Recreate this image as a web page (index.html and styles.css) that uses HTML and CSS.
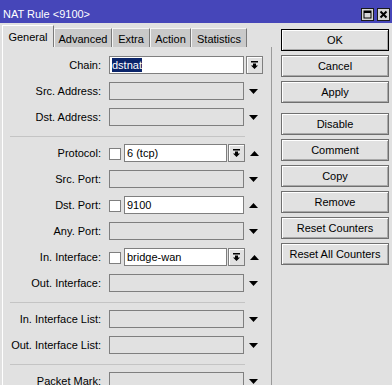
FILE: index.html
```html
<!DOCTYPE html>
<html>
<head>
    <meta charset="UTF-8">
    <title>NAT Rule &lt;9100&gt;</title>
    <link rel="stylesheet" href="styles.css">
</head>
<body>
    <div class="window">
        <div class="titlebar">
            <span class="title">NAT Rule &lt;9100&gt;</span>
            <div class="winbtns">
                <span class="winbtn">
                    <svg width="9" height="9" viewBox="0 0 9 9"><rect x="1" y="1" width="7" height="7" fill="none" stroke="#000"/><rect x="1" y="1" width="7" height="2"/></svg>
                </span>
                <span class="winbtn">
                    <svg width="9" height="9" viewBox="0 0 9 9"><path d="M1.5 1.5l6 6M7.5 1.5l-6 6" stroke="#000" stroke-width="2"/></svg>
                </span>
            </div>
        </div>

        <div class="main">
            <div class="left">
                <div class="tabs">
                    <div class="tab active" style="width:52px">General</div>
                    <div class="tab" style="width:58px">Advanced</div>
                    <div class="tab" style="width:38px">Extra</div>
                    <div class="tab" style="width:41px">Action</div>
                    <div class="tab" style="width:56px">Statistics</div>
                </div>

                <div class="panel">
                    <div class="row">
                        <label>Chain:</label>
                        <div class="input select"><span class="sel">dstnat</span></div>
                        <span class="dropbtn wide"><svg width="7" height="8" viewBox="0 0 7 8"><rect x="0" y="0" width="7" height="1.5"/><path d="M2 2.5h3v2h2l-3.5 3.5-3.5-3.5h2z"/></svg></span>
                    </div>
                    <div class="row">
                        <label>Src. Address:</label>
                        <div class="input empty"></div>
                        <span class="arrow"><svg width="9" height="5" viewBox="0 0 9 5"><path d="M0 0h9l-4.5 5z"/></svg></span>
                    </div>
                    <div class="row">
                        <label>Dst. Address:</label>
                        <div class="input empty"></div>
                        <span class="arrow"><svg width="9" height="5" viewBox="0 0 9 5"><path d="M0 0h9l-4.5 5z"/></svg></span>
                    </div>

                    <div class="sep"></div>

                    <div class="row">
                        <label>Protocol:</label>
                        <span class="check"></span>
                        <div class="input short">6 (tcp)</div>
                        <span class="dropbtn"><svg width="7" height="8" viewBox="0 0 7 8"><rect x="0" y="0" width="7" height="1.5"/><path d="M2 2.5h3v2h2l-3.5 3.5-3.5-3.5h2z"/></svg></span>
                        <span class="arrow"><svg width="9" height="5" viewBox="0 0 9 5"><path d="M0 5h9l-4.5-5z"/></svg></span>
                    </div>
                    <div class="row">
                        <label>Src. Port:</label>
                        <div class="input empty"></div>
                        <span class="arrow"><svg width="9" height="5" viewBox="0 0 9 5"><path d="M0 0h9l-4.5 5z"/></svg></span>
                    </div>
                    <div class="row">
                        <label>Dst. Port:</label>
                        <span class="check"></span>
                        <div class="input long">9100</div>
                        <span class="arrow"><svg width="9" height="5" viewBox="0 0 9 5"><path d="M0 5h9l-4.5-5z"/></svg></span>
                    </div>
                    <div class="row">
                        <label>Any. Port:</label>
                        <div class="input empty"></div>
                        <span class="arrow"><svg width="9" height="5" viewBox="0 0 9 5"><path d="M0 0h9l-4.5 5z"/></svg></span>
                    </div>
                    <div class="row">
                        <label>In. Interface:</label>
                        <span class="check"></span>
                        <div class="input short">bridge-wan</div>
                        <span class="dropbtn"><svg width="7" height="8" viewBox="0 0 7 8"><rect x="0" y="0" width="7" height="1.5"/><path d="M2 2.5h3v2h2l-3.5 3.5-3.5-3.5h2z"/></svg></span>
                        <span class="arrow"><svg width="9" height="5" viewBox="0 0 9 5"><path d="M0 5h9l-4.5-5z"/></svg></span>
                    </div>
                    <div class="row">
                        <label>Out. Interface:</label>
                        <div class="input empty"></div>
                        <span class="arrow"><svg width="9" height="5" viewBox="0 0 9 5"><path d="M0 0h9l-4.5 5z"/></svg></span>
                    </div>

                    <div class="sep"></div>

                    <div class="row">
                        <label>In. Interface List:</label>
                        <div class="input empty"></div>
                        <span class="arrow"><svg width="9" height="5" viewBox="0 0 9 5"><path d="M0 0h9l-4.5 5z"/></svg></span>
                    </div>
                    <div class="row">
                        <label>Out. Interface List:</label>
                        <div class="input empty"></div>
                        <span class="arrow"><svg width="9" height="5" viewBox="0 0 9 5"><path d="M0 0h9l-4.5 5z"/></svg></span>
                    </div>

                    <div class="sep"></div>

                    <div class="row">
                        <label>Packet Mark:</label>
                        <div class="input empty"></div>
                        <span class="arrow"><svg width="9" height="5" viewBox="0 0 9 5"><path d="M0 0h9l-4.5 5z"/></svg></span>
                    </div>
                </div>
            </div>

            <div class="buttons">
                <button class="btn default">OK</button>
                <button class="btn">Cancel</button>
                <button class="btn">Apply</button>
                <button class="btn spaced">Disable</button>
                <button class="btn">Comment</button>
                <button class="btn">Copy</button>
                <button class="btn">Remove</button>
                <button class="btn">Reset Counters</button>
                <button class="btn">Reset All Counters</button>
            </div>
        </div>
    </div>
</body>
</html>
```

FILE: styles.css
```css
body {
    margin: 0;
    width: 392px;
    height: 385px;
    overflow: hidden;
    font-family: "Liberation Sans", Arial, sans-serif;
    font-size: 11px;
    color: #000;
    background: #e1e1e1;
}
.window {
    width: 392px;
    height: 385px;
    display: flex;
    flex-direction: column;
}
.titlebar {
    height: 23px;
    background: #4646b9;
    display: flex;
    justify-content: space-between;
    flex-shrink: 0;
}
.title {
    color: #fff;
    padding: 8px 0 0 3px;
    line-height: 13px;
}
.winbtns {
    display: flex;
    align-items: flex-end;
    gap: 3px;
    padding: 0 2px 2px 0;
}
.winbtn {
    width: 11px;
    height: 11px;
    border: 1px solid #1a1a1a;
    background: #d6d6d6;
    display: flex;
    align-items: center;
    justify-content: center;
}
.main {
    flex: 1;
    display: flex;
    min-height: 0;
}
.left {
    width: 270px;
    margin-left: 2px;
    display: flex;
    flex-direction: column;
}
.tabs {
    height: 24px;
    display: flex;
    align-items: flex-end;
    flex-shrink: 0;
}
.tab {
    box-sizing: border-box;
    height: 19px;
    padding-top: 4px;
    line-height: 13px;
    text-align: center;
    background: #c9c9c9;
    border-top: 1px solid #f4f4f4;
    border-left: 1px solid #f4f4f4;
    border-right: 1px solid #7a7a7a;
}
.tab.active {
    height: 22px;
    padding-top: 5px;
    background: #e1e1e1;
    border-top-color: #fff;
    border-left-color: #fff;
}
.panel {
    flex: 1;
    border-left: 1px solid #fff;
    border-right: 1px solid #9a9a9a;
    padding-top: 9px;
    display: flex;
    flex-direction: column;
    gap: 8px;
}
.row {
    display: flex;
    align-items: center;
    height: 18px;
    flex-shrink: 0;
}
.row label {
    width: 98px;
    margin-right: 8px;
    text-align: right;
    white-space: nowrap;
}
.input {
    box-sizing: border-box;
    height: 18px;
    border: 1px solid #7f7f7f;
    background: #fff;
    padding-left: 2px;
    line-height: 16px;
    white-space: nowrap;
}
.input.select {
    width: 135px;
}
.input.empty {
    width: 135px;
    background: #e1e1e1;
}
.input.short {
    width: 103px;
}
.input.long {
    width: 120px;
}
.sel {
    background: #0a246a;
    color: #fff;
    display: inline-block;
    line-height: 14px;
}
.check {
    box-sizing: border-box;
    width: 12px;
    height: 12px;
    margin: 2px 3px 0 0;
    border: 1px solid #7f7f7f;
    background: #fff;
}
.dropbtn {
    box-sizing: border-box;
    width: 17px;
    height: 18px;
    margin-left: 1px;
    border: 1px solid #7f7f7f;
    box-shadow: inset 1px 1px #fff;
    background: #e1e1e1;
    display: flex;
    align-items: center;
    justify-content: center;
}
.dropbtn.wide {
    margin-left: 2px;
}
.arrow {
    width: 9px;
    margin-left: 5px;
    display: flex;
}
.sep {
    height: 1px;
    margin: 2px 0 -1px 7px;
    width: 235px;
    background: #c4c4c4;
    flex-shrink: 0;
}
.buttons {
    width: 108px;
    margin: 6px 0 0 9px;
    display: flex;
    flex-direction: column;
    gap: 4px;
}
.btn {
    box-sizing: border-box;
    height: 22px;
    padding: 0;
    font-family: inherit;
    font-size: 11px;
    color: #000;
    background: #e1e1e1;
    border: 1px solid #6f6f6f;
    box-shadow: inset 1px 1px #fff, inset -1px -1px #a9a9a9;
}
.btn.default {
    border-color: #000;
}
.btn.spaced {
    margin-top: 6px;
}
```
